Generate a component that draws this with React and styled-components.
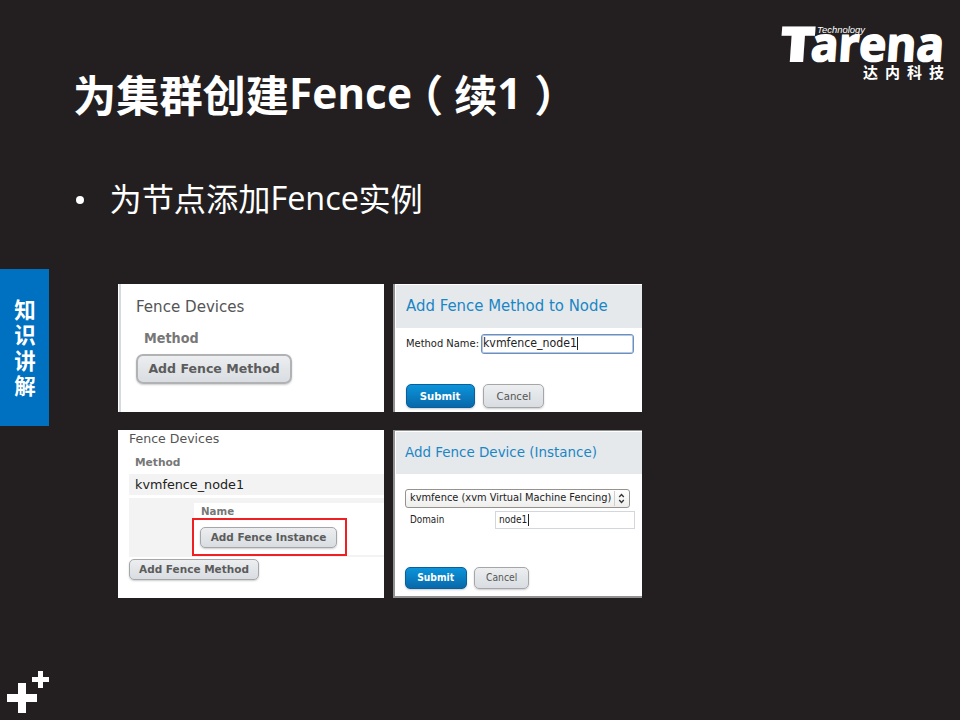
import React from "react";
import styled, { createGlobalStyle } from "styled-components";

const GlobalStyle = createGlobalStyle`
  * { box-sizing: border-box; }
  body { margin: 0; background: #231f20; }
`;

const Slide = styled.div`
  width: 960px;
  height: 720px;
  overflow: hidden;
  background: #231f20;
  color: #fff;
  display: grid;
  grid-template-columns: 49px 1fr 182px;
  font-family: "Open Sans", "Noto Sans CJK SC", sans-serif;
`;

const Side = styled.aside`
  display: flex;
  flex-direction: column;
  justify-content: space-between;
  padding-top: 269px;
`;

const Tab = styled.div`
  height: 157px;
  background: #0070c0;
  display: flex;
  align-items: flex-start;
  justify-content: center;
  padding-top: 30px;
  font: 700 21.5px/32px "Noto Sans CJK SC", sans-serif;
`;

const TabText = styled.span`
  writing-mode: vertical-rl;
  letter-spacing: 4px;
`;

const Main = styled.main`
  display: flex;
  flex-direction: column;
  padding-left: 26px;
`;

const Title = styled.h1`
  display: flex;
  margin: 63px 0 0 -2px;
  height: 60px;
  white-space: nowrap;
  font: 700 43.2px/60px "Noto Sans CJK SC", sans-serif;
`;

const Latin = styled.span`
  font-family: "Open Sans", sans-serif;
  font-size: ${(p) => p.$size}px;
  width: ${(p) => p.$width}px;
`;

const Paren = styled.span`
  transform: translateX(${(p) => p.$shift}px);
`;

const Bullet = styled.div`
  display: flex;
  height: 48px;
  margin-top: 50px;
  white-space: nowrap;
  font: 400 32.2px/48px "Noto Sans CJK SC", sans-serif;
`;

const Dot = styled.i`
  width: 8px;
  height: 8px;
  margin: 23px 26px 0 0.5px;
  border-radius: 50%;
  background: #fff;
`;

const Shots = styled.div`
  display: grid;
  grid-template-columns: 266px 249px;
  grid-template-rows: 128px 168px;
  gap: 18px 9px;
  margin: 63px 0 0 43px;
`;

const Panel = styled.section`
  background: #fff;
  overflow: hidden;
  display: flex;
  flex-direction: column;
  align-items: flex-start;
  font-family: "DejaVu Sans", sans-serif;
`;

const DevicesPanel = styled(Panel)`
  padding-left: ${(p) => p.$inset}px;
  box-shadow: ${(p) => (p.$edge ? "inset 1px 0 #fff, inset 3px 0 #d5dade" : "none")};
`;

const Dialog = styled(Panel)`
  border: 0 solid #8f9192;
  border-width: ${(p) => p.$frame};
`;

const DialogHead = styled.header`
  width: 100%;
  height: ${(p) => p.$height}px;
  border: solid #fff;
  border-width: ${(p) => p.$gap}px 0 0 1px;
  background: #e6e9ec;
`;

const Label = styled.span`
  display: block;
  flex: none;
  height: 16px;
  line-height: 16px;
  white-space: nowrap;
  font-size: ${(p) => p.$size}px;
  font-weight: ${(p) => (p.$bold ? 700 : 400)};
  color: ${(p) => p.$color || "#222"};
  margin: ${(p) => p.$top || 0}px 0 0 ${(p) => p.$left || 0}px;
  transform: scaleX(${(p) => p.$stretch || 1});
  transform-origin: ${(p) => (p.$center ? "50%" : "0")} 50%;
`;

const Row = styled.div`
  display: flex;
  align-items: flex-start;
  margin: ${(p) => p.$top || 0}px 0 0 ${(p) => p.$left || 0}px;
  gap: ${(p) => p.$gap || 0}px;
`;

const Button = styled.button`
  flex: none;
  display: flex;
  align-items: center;
  justify-content: center;
  padding: 0 0 ${(p) => p.$lift || 0}px;
  width: ${(p) => p.$width}px;
  height: ${(p) => p.$height}px;
  margin-top: ${(p) => p.$top || 0}px;
  border: ${(p) => p.$line || 1}px solid
    ${(p) => (p.$primary ? "#0a5f9b" : p.$line > 1 ? "#b0b2b4" : "#a4a6a8")};
  border-radius: ${(p) => p.$radius || 5}px;
  background: ${(p) =>
    p.$primary
      ? "linear-gradient(#0c94da, #0868aa)"
      : "linear-gradient(#eceef0, #d9dde1)"};
  box-shadow: 0 1px 2px rgba(0, 0, 0, 0.2);
  font-family: inherit;
`;

const Field = styled.div`
  display: flex;
  align-items: flex-start;
  width: ${(p) => p.$width}px;
  height: ${(p) => p.$height}px;
  border: 1px solid ${(p) => (p.$focus ? "#6a8fc0" : "#d3d7db")};
  border-radius: ${(p) => (p.$focus ? 3 : 0)}px;
  box-shadow: ${(p) => (p.$focus ? "inset 0 0 0 1px #b5c8e2" : "none")};
  background: #fff;
`;

const Clip = styled.div`
  flex: none;
  width: ${(p) => p.$width}px;
`;

const Caret = styled.i`
  width: 1px;
  height: ${(p) => p.$height}px;
  margin-top: ${(p) => p.$top}px;
  background: #222;
`;

const Select = styled.div`
  display: flex;
  width: 225px;
  height: 19px;
  margin: 15px 0 0 10px;
  border: 1px solid #96938f;
  border-radius: 3px;
  background: linear-gradient(#fff, #eeeeed);
`;

const Stepper = styled.div`
  width: 14px;
  height: 15px;
  margin-top: 1px;
  border-left: 1px solid #d0cdca;
`;

const MethodRow = styled.div`
  width: 100%;
  height: 21px;
  margin-top: 4px;
  background: #f3f3f3;
`;

const InstanceRow = styled.div`
  width: 100%;
  height: 59px;
  margin-top: 3px;
  padding: 3px 0 4px 65px;
  background: #f3f3f3;
`;

const InstanceBody = styled.div`
  height: 52px;
  background: #fff;
`;

const Highlight = styled.div`
  width: 155px;
  height: 38px;
  margin: -1px 0 0 -2px;
  padding: 7px 0 0 6px;
  border: 2px solid #f02022;
`;

const Brand = styled.svg`
  width: 182px;
  height: 90px;
  overflow: visible;
`;

const Pluses = styled.svg`
  width: 60px;
  height: 60px;
`;

const blue = "#1a86c4";

function Actions({ top, left, submit, cancel, height, size, gap, stretch }) {
  return (
    <Row $top={top} $left={left} $gap={gap}>
      <Button $primary $width={submit} $height={height}>
        <Label $center $bold $size={size} $stretch={stretch} $color="#fff">Submit</Label>
      </Button>
      <Button $width={cancel} $height={height}>
        <Label $center $size={size} $stretch={stretch} $color="#555">Cancel</Label>
      </Button>
    </Row>
  );
}

export default function App() {
  return (
    <>
      <GlobalStyle />
      <Slide>
        <Side>
          <Tab>
            <TabText>知识讲解</TabText>
          </Tab>
          <Pluses viewBox="0 0 60 60" fill="#fff">
            <path d="M18 23h8v11h11v8H26v11h-8V42H7v-8h11zM38 11h5v6h6v5h-6v6h-5v-6h-6v-5h6z" />
          </Pluses>
        </Side>

        <Main>
          <Title>
            <span>为集群创建</span>
            <Latin $size={42.4} $width={122}>Fence</Latin>
            <Paren $shift={-11}>（</Paren>
            <span>续</span>
            <Latin $size={42.4} $width={25}>1</Latin>
            <Paren $shift={12}>）</Paren>
          </Title>
          <Bullet>
            <Dot />
            <span>为节点添加</span>
            <Latin $size={32.4} $width={88}>Fence</Latin>
            <span>实例</span>
          </Bullet>

          <Shots>
            <DevicesPanel $inset={18} $edge>
              <Label $top={15} $size={15} $stretch={1.005} $color="#555">Fence Devices</Label>
              <Label $top={15} $left={8} $size={13.5} $stretch={0.95} $bold $color="#777">Method</Label>
              <Button $top={8} $width={156} $height={30} $line={2} $radius={7} $lift={1}>
                <Label $center $bold $size={13} $stretch={0.965} $color="#5c5c5c">Add Fence Method</Label>
              </Button>
            </DevicesPanel>

            <Dialog $frame="0 0 0 2px">
              <DialogHead $gap={1} $height={44}>
                <Label $top={13} $left={10} $size={15} $stretch={0.995} $color={blue}>Add Fence Method to Node</Label>
              </DialogHead>
              <Row $top={6} $left={11}>
                <Clip $width={75}>
                  <Label $top={1} $size={10.5} $stretch={0.945}>Method Name:</Label>
                </Clip>
                <Field $focus $width={153} $height={20}>
                  <Clip $width={95}>
                    <Label $top={0} $left={1} $size={12} $stretch={0.917}>kvmfence_node1</Label>
                  </Clip>
                  <Caret $top={2} $height={13} />
                </Field>
              </Row>
              <Actions top={30} left={11} submit={69} cancel={61} height={24} size={10.5} gap={8} stretch={0.97} />
            </Dialog>

            <DevicesPanel $inset={11}>
              <Label $top={1} $size={12} $stretch={1.045} $color="#555">Fence Devices</Label>
              <Label $top={7} $left={6} $size={10.5} $stretch={1.015} $bold $color="#777">Method</Label>
              <MethodRow>
                <Label $top={3} $left={6} $size={11.5} $stretch={1.11}>kvmfence_node1</Label>
              </MethodRow>
              <InstanceRow>
                <InstanceBody>
                  <Label $top={2} $left={6.5} $size={10.5} $stretch={0.975} $bold $color="#777">Name</Label>
                  <Highlight>
                    <Button $width={137} $height={21} $lift={1} $line={1}>
                      <Label $center $bold $size={10.5} $color="#5c5c5c">Add Fence Instance</Label>
                    </Button>
                  </Highlight>
                </InstanceBody>
              </InstanceRow>
              <Button $top={2} $width={130} $height={21} $lift={1} $line={1}>
                <Label $center $bold $size={10.5} $color="#5c5c5c">Add Fence Method</Label>
              </Button>
            </DevicesPanel>

            <Dialog $frame="1px 0 2px 2px">
              <DialogHead $gap={1} $height={43}>
                <Label $top={12} $left={9} $size={13.7} $stretch={0.982} $color={blue}>Add Fence Device (Instance)</Label>
              </DialogHead>
              <Select>
                <Clip $width={208}>
                  <Label $top={0} $left={4} $size={11.2} $stretch={0.88}>kvmfence (xvm Virtual Machine Fencing)</Label>
                </Clip>
                <Stepper>
                  <svg width="14" height="15" viewBox="0 0 14 15" fill="none" stroke="#333" strokeWidth="1.3">
                    <path d="M4.2 6 6.5 3.5 8.8 6M4.2 9 6.5 11.5 8.8 9" />
                  </svg>
                </Stepper>
              </Select>
              <Row $top={3} $left={14.5}>
                <Clip $width={85}>
                  <Label $top={1} $size={9.6} $stretch={0.92}>Domain</Label>
                </Clip>
                <Field $width={140} $height={18}>
                  <Clip $width={32}>
                    <Label $top={0} $left={3} $size={9.8} $stretch={0.92}>node1</Label>
                  </Clip>
                  <Caret $top={2} $height={12} />
                </Field>
              </Row>
              <Actions top={38} left={10} submit={62} cancel={55} height={22} size={9.8} gap={7} stretch={0.94} />
            </Dialog>
          </Shots>
        </Main>

        <Brand viewBox="778 0 182 90" fill="#fff" fontFamily="Open Sans, sans-serif">
          <g transform="translate(0 60.5) skewX(-4)" fontSize="47" fontWeight="700" stroke="#fff" strokeWidth="1.8">
            <text x="779.5" y="0" fontWeight="800" textLength="34" lengthAdjust="spacingAndGlyphs">T</text>
            <text x="810" y="0" textLength="133" lengthAdjust="spacingAndGlyphs">arena</text>
          </g>
          <text x="817" y="32.5" fontSize="9" fontFamily="Liberation Sans, sans-serif" fontStyle="italic" textLength="48" lengthAdjust="spacingAndGlyphs">Technology</text>
          <text x="863 885 907 929" y="77.5" fontSize="15" fontWeight="700" fontFamily="Noto Sans CJK SC, sans-serif">达内科技</text>
        </Brand>
      </Slide>
    </>
  );
}
